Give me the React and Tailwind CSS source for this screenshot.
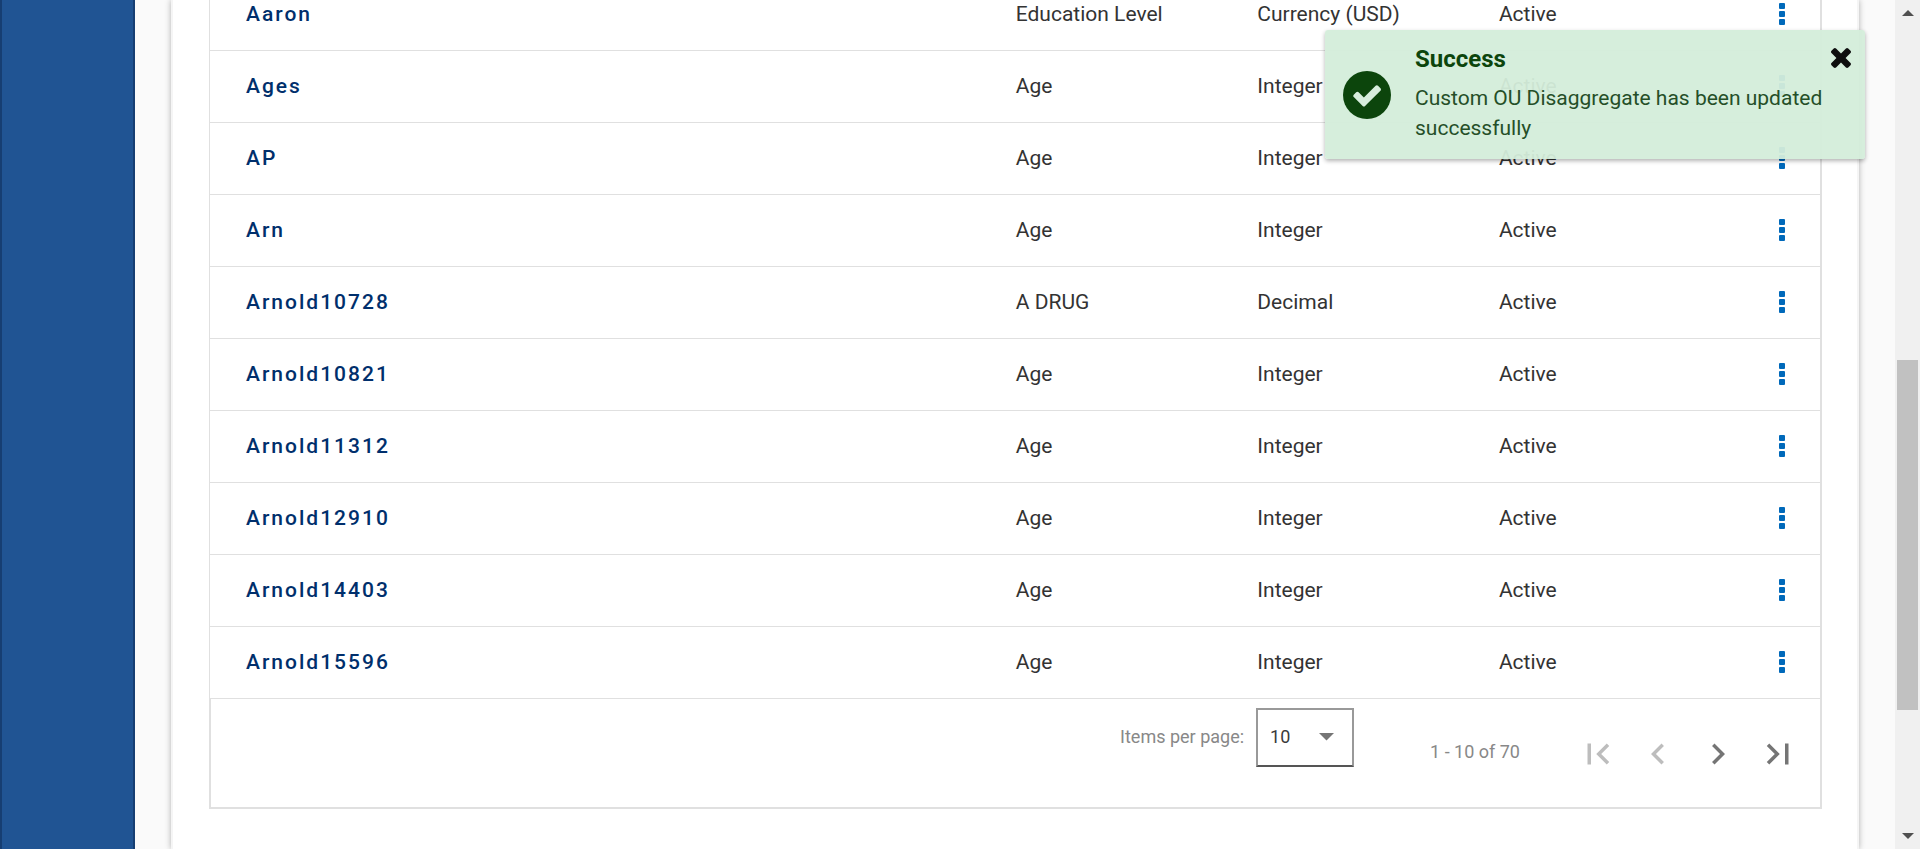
import React from "react";
import { MdFirstPage, MdChevronLeft, MdChevronRight, MdLastPage } from "react-icons/md";

const rows = [
  ["Aaron", "Education Level", "Currency (USD)"],
  ["Ages", "Age", "Integer"],
  ["AP", "Age", "Integer"],
  ["Arn", "Age", "Integer"],
  ["Arnold10728", "A DRUG", "Decimal"],
  ["Arnold10821", "Age", "Integer"],
  ["Arnold11312", "Age", "Integer"],
  ["Arnold12910", "Age", "Integer"],
  ["Arnold14403", "Age", "Integer"],
  ["Arnold15596", "Age", "Integer"],
];

function Kebab() {
  return (
    <svg className="h-[22px] w-[6px]" viewBox="0 0 6 22" fill="#0069ba">
      <rect y="0" width="6" height="6" rx="1" />
      <rect y="8" width="6" height="6" rx="1" />
      <rect y="16" width="6" height="6" rx="1" />
    </svg>
  );
}

function Row({ name, type, format }) {
  return (
    <tr className="h-[72px] border-b border-[#e0e0e0]">
      <th scope="row" className="w-1/2 pt-0.5 pl-9 text-left font-medium">
        <a href="#" className="tracking-[2px] text-[#002f6c]">{name}</a>
      </th>
      <td className="w-[15%] pt-0.5 pl-px">{type}</td>
      <td className="w-[15%] pt-0.5 pl-px">{format}</td>
      <td className="w-[15%] pt-0.5 pl-px">Active</td>
      <td className="w-[5%] pl-1">
        <button type="button" aria-label={"Actions for " + name} className="flex w-full justify-center">
          <Kebab />
        </button>
      </td>
    </tr>
  );
}

function PageButton({ label, icon: Icon, disabled }) {
  return (
    <button
      type="button"
      aria-label={label}
      disabled={disabled}
      className="flex size-[60px] items-center justify-center text-[#757575] disabled:text-[#bdbdbd]"
    >
      <Icon className="size-[42px]" />
    </button>
  );
}

function Paginator() {
  return (
    <div className="flex h-[110px] items-start justify-end border-b-2 border-l-2 border-[#e0e0e0] pr-3 text-lg text-[#888888]">
      <div className="flex items-center pt-[9px]">
        <label htmlFor="page-size">Items per page:</label>
        <div className="relative ml-3">
          <select
            id="page-size"
            defaultValue="10"
            className="block h-[59px] w-[98px] appearance-none border-2 border-[#999999] border-b-[#555555] bg-white pl-3 text-[#3a3a3a]"
          >
            <option>10</option>
            <option>25</option>
            <option>50</option>
          </select>
          <svg className="pointer-events-none absolute top-[25px] right-5 h-2 w-[15px]" viewBox="0 0 15 8" fill="#757575">
            <path d="M0 0h15L7.5 7.500z" />
          </svg>
        </div>
      </div>
      <div className="flex items-center pt-[25px]">
        <span className="mr-12 ml-[76px] pb-1">1 - 10 of 70</span>
        <PageButton label="First page" icon={MdFirstPage} disabled />
        <PageButton label="Previous page" icon={MdChevronLeft} disabled />
        <PageButton label="Next page" icon={MdChevronRight} />
        <PageButton label="Last page" icon={MdLastPage} />
      </div>
    </div>
  );
}

function Toast() {
  return (
    <div
      role="status"
      className="absolute top-[30px] right-[55px] flex w-[540px] items-center rounded-[3px] bg-[#d4edda]/95 py-3 pl-[18px] text-[#0c450c] shadow-[0_2px_4px_rgba(0,0,0,0.3)]"
    >
      <svg className="size-12 shrink-0" viewBox="0 0 48 48">
        <circle cx="24" cy="24" r="24" fill="#0c450c" />
        <path
          transform="translate(8.1 8.3) scale(0.01787)"
          fill="#d7eedd"
          d="M1671 566q0 40-28 68l-724 724-136 136q-28 28-68 28t-68-28l-136-136-362-362q-28-28-28-68t28-68l136-136q28-28 68-28t68 28l294 295 656-657q28-28 68-28t68 28l136 136q28 28 28 68z"
        />
      </svg>
      <div className="ml-6 w-[410px] pt-px pb-1">
        <h2 className="text-2xl leading-8 font-bold">Success</h2>
        <p className="pt-2 text-[21px] leading-[30px] text-[#254f28]">Custom OU Disaggregate has been updated successfully</p>
      </div>
      <button type="button" aria-label="Close" className="absolute top-[18px] right-[14px]">
        <svg className="size-5" viewBox="110 366 1188 1188" fill="#0e0e0e">
          <path d="M1298 1322q0 40-28 68l-136 136q-28 28-68 28t-68-28l-294-294-294 294q-28 28-68 28t-68-28l-136-136q-28-28-28-68t28-68l294-294-294-294q-28-28-28-68t28-68l136-136q28-28 68-28t68 28l294 294 294-294q28-28 68-28t68 28l136 136q28 28 28 68t-28 68l-294 294 294 294q28 28 28 68z" />
        </svg>
      </button>
    </div>
  );
}

function Scrollbar() {
  return (
    <div aria-hidden="true" className="flex w-[25px] shrink-0 flex-col items-center bg-[#f0f0f0] py-[10px]">
      <svg className="h-[6px] w-3" viewBox="0 0 12 6" fill="#505050"><path d="M0 6h12L6 0z" /></svg>
      <div className="flex w-full flex-1 flex-col px-[2px]">
        <div className="flex-[344]" />
        <div className="flex-[350] bg-[#c1c1c1]" />
        <div className="flex-[123]" />
      </div>
      <svg className="h-[6px] w-3" viewBox="0 0 12 6" fill="#505050"><path d="M0 0h12L6 6z" /></svg>
    </div>
  );
}

export default function App() {
  return (
    <div className="relative flex h-screen overflow-hidden bg-[#fafafa] font-[Roboto,sans-serif] text-[#333333]">
      <aside className="w-[135px] shrink-0 border-x-2 border-[#163e72] bg-[#205493]" />
      <main className="flex min-w-0 flex-1 px-9">
        <section className="flex-1 border-x-2 border-[#f5f5f5] bg-white pr-[35px] pl-9 shadow-[0_0_6px_rgba(0,0,0,0.3)]">
          <div className="-mt-[22px] border-r-2 border-[#e0e0e0]">
            <table className="w-full table-fixed border-collapse border-l border-[#e0e0e0] text-[21px]">
              <tbody>
                {rows.map(([name, type, format]) => (
                  <Row key={name} name={name} type={type} format={format} />
                ))}
              </tbody>
            </table>
            <Paginator />
          </div>
        </section>
      </main>
      <Scrollbar />
      <Toast />
    </div>
  );
}
